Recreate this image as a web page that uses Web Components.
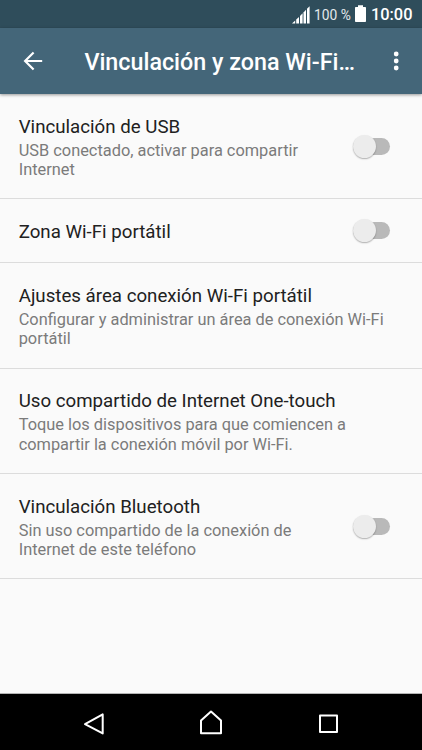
<!DOCTYPE html>
<html lang="es">
<head>
<meta charset="utf-8">
<title>Vinculación y zona Wi-Fi portátil</title>
<style>
  body {
    margin: 0;
    background: #fafafa;
    font-family: Roboto, "Liberation Sans", sans-serif;
  }
</style>
</head>
<body>
<settings-screen></settings-screen>

<script>
class StatusBar extends HTMLElement {
  constructor() {
    super();
    this.shadowDOM = this.attachShadow({ mode: "open" });
  }

  connectedCallback() {
    this.shadowDOM.innerHTML = `
    <style>
    :host {
      display: flex;
      align-items: center;
      justify-content: flex-end;
      box-sizing: border-box;
      height: 28px;
      padding-right: 9.5px;
      background: #2f4d5b;
      color: #fff;
    }
    svg {
      display: block;
    }
    .level {
      margin: 2px 4px 0 4.5px;
      font-size: 13.8px;
      line-height: 16px;
      color: #e3e9eb;
      white-space: nowrap;
    }
    .clock {
      margin: 2px 0 0 5px;
      font-size: 16.4px;
      line-height: 20px;
      font-weight: 500;
    }
    </style>

    <svg width="18" height="28" viewBox="0 0 18 28" fill="#fff">
      <path d="M0 23.5 L3.2 20.5V23.5Z"/>
      <path d="M4.2 19.5L7 17V23.5H4.2Z"/>
      <path d="M8 16L10.6 13.3V23.5H8Z"/>
      <path d="M11.5 12.5L14 9.8V23.5H11.5Z"/>
      <path d="M15 8.8L17.6 6.2V23.5H15Z"/>
    </svg>
    <span class="level"><slot name="level"></slot></span>
    <svg width="11" height="28" viewBox="0 0 11 28" fill="#fff">
      <path d="M3 5.3H8V7H10.2Q11 7 11 7.8V21.2Q11 22 10.2 22H.8Q0 22 0 21.2V7.8Q0 7 .8 7H3Z"/>
    </svg>
    <span class="clock"><slot name="clock"></slot></span>
    `;
  }
}

class AppBar extends HTMLElement {
  constructor() {
    super();
    this.shadowDOM = this.attachShadow({ mode: "open" });
  }

  connectedCallback() {
    this.shadowDOM.innerHTML = `
    <style>
    :host {
      display: flex;
      align-items: center;
      position: relative;
      box-sizing: border-box;
      height: 66px;
      padding: 0 16px 0 23px;
      background: #446679;
      color: #fff;
      box-shadow: 0 1px 3px rgba(0, 0, 0, 0.4);
    }
    svg {
      display: block;
      flex: none;
    }
    h1 {
      flex: 1;
      margin: 2px 0 0 41.4px;
      font-size: 23.3px;
      line-height: 28px;
      font-weight: 500;
      white-space: nowrap;
    }
    </style>

    <svg width="20" height="20" viewBox="0 0 20 20" fill="none" stroke="#fff" stroke-width="2.2">
      <path d="M19.2 10H2.2M10.6 1.5L2.1 10L10.6 18.5"/>
    </svg>
    <h1><slot></slot></h1>
    <svg width="20" height="20" viewBox="0 0 20 20" fill="#fff">
      <circle cx="10.2" cy="3" r="2.4"/>
      <circle cx="10.2" cy="10" r="2.4"/>
      <circle cx="10.2" cy="17" r="2.4"/>
    </svg>
    `;
  }
}

class ToggleSwitch extends HTMLElement {
  constructor() {
    super();
    this.shadowDOM = this.attachShadow({ mode: "open" });
  }

  connectedCallback() {
    this.shadowDOM.innerHTML = `
    <style>
    :host {
      display: flex;
      align-items: center;
      width: 37px;
      height: 24px;
    }
    .track {
      flex: 1;
      height: 17px;
      margin-left: 4px;
      border-radius: 9px;
      background: #b9b9b9;
    }
    .thumb {
      flex: none;
      width: 23px;
      height: 23px;
      margin-right: -27px;
      border-radius: 50%;
      background: #ececec;
      box-shadow: 0 1px 1.5px rgba(0, 0, 0, 0.3);
      z-index: 1;
    }
    </style>

    <div class="thumb"></div>
    <div class="track"></div>
    `;
  }
}

class SettingItem extends HTMLElement {
  constructor() {
    super();
    this.shadowDOM = this.attachShadow({ mode: "open" });
  }

  set setting(setting) {
    this._setting = setting;
    this.render();
  }

  render() {
    const { title, summary, toggle } = this._setting;
    this.shadowDOM.innerHTML = `
    <style>
    :host {
      display: flex;
      align-items: center;
      box-sizing: border-box;
      height: ${summary ? "105.4px" : "64.2px"};
      padding: 0 32px 0 18.7px;
      border-bottom: 1px solid #dcdcdc;
    }
    :host(:first-child) {
      height: 105px;
    }
    .text {
      flex: 1;
      margin-top: 2.6px;
    }
    h2 {
      margin: 0;
      font-size: 18.7px;
      line-height: 22px;
      font-weight: 400;
      color: #212121;
      white-space: nowrap;
    }
    p {
      margin: 3px 0 0;
      font-size: 16.37px;
      line-height: 19.2px;
      color: #7b7b7b;
      white-space: nowrap;
    }
    </style>

    <div class="text">
      <h2>${title}</h2>
      ${summary ? `<p>${summary.join("<br>")}</p>` : ""}
    </div>
    ${toggle ? "<toggle-switch></toggle-switch>" : ""}
    `;
  }
}

class NavigationBar extends HTMLElement {
  constructor() {
    super();
    this.shadowDOM = this.attachShadow({ mode: "open" });
  }

  connectedCallback() {
    this.shadowDOM.innerHTML = `
    <style>
    :host {
      display: flex;
      align-items: center;
      justify-content: center;
      gap: 93px;
      height: 56px;
      background: #000;
      box-shadow: 0 -1px #b4b4b4;
    }
    svg {
      display: block;
      fill: none;
      stroke: #fff;
      stroke-width: 2;
      stroke-linejoin: round;
    }
    </style>

    <svg width="24" height="28" viewBox="0 0 24 28">
      <path d="M3 16L20.7 6.2V25.2Z" transform="translate(0 .2)"/>
    </svg>
    <svg width="24" height="28" viewBox="0 0 24 28">
      <path d="M2 25.8V13L12 4L22 13V25.8Z" transform="translate(0 -.5)"/>
    </svg>
    <svg width="24" height="28" viewBox="0 0 24 28">
      <path d="M4 7.5H21V24H4Z"/>
    </svg>
    `;
  }
}

class SettingsScreen extends HTMLElement {
  constructor() {
    super();
    this.shadowDOM = this.attachShadow({ mode: "open" });
  }

  connectedCallback() {
    this.shadowDOM.innerHTML = `
    <style>
    :host {
      display: flex;
      flex-direction: column;
      width: 422px;
      height: 750px;
      overflow: hidden;
    }
    main {
      flex: 1;
    }
    </style>

    <status-bar>
      <span slot="level">100 %</span>
      <span slot="clock">10:00</span>
    </status-bar>
    <app-bar>Vinculación y zona Wi-Fi…</app-bar>
    <main></main>
    <navigation-bar></navigation-bar>
    `;

    const list = this.shadowDOM.querySelector("main");
    settings.forEach((setting) => {
      const item = document.createElement("setting-item");
      item.setting = setting;
      list.appendChild(item);
    });
  }
}

const settings = [
  {
    title: "Vinculación de USB",
    summary: ["USB conectado, activar para compartir", "Internet"],
    toggle: true,
  },
  { title: "Zona Wi-Fi portátil", toggle: true },
  {
    title: "Ajustes área conexión Wi-Fi portátil",
    summary: ["Configurar y administrar un área de conexión Wi-Fi", "portátil"],
  },
  {
    title: "Uso compartido de Internet One-touch",
    summary: ["Toque los dispositivos para que comiencen a", "compartir la conexión móvil por Wi-Fi."],
  },
  {
    title: "Vinculación Bluetooth",
    summary: ["Sin uso compartido de la conexión de", "Internet de este teléfono"],
    toggle: true,
  },
];

customElements.define("status-bar", StatusBar);
customElements.define("app-bar", AppBar);
customElements.define("toggle-switch", ToggleSwitch);
customElements.define("setting-item", SettingItem);
customElements.define("navigation-bar", NavigationBar);
customElements.define("settings-screen", SettingsScreen);
</script>
</body>
</html>
